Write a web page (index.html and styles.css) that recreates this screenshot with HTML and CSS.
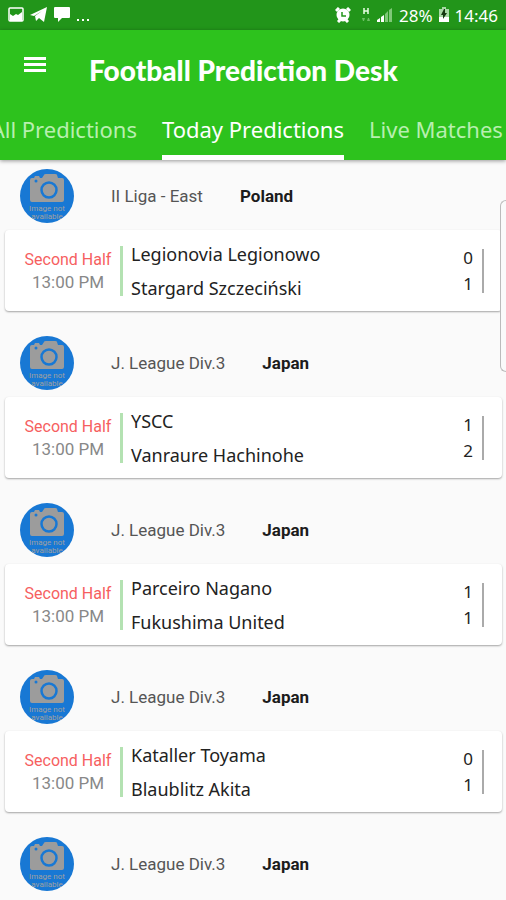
FILE: index.html
```html
<!DOCTYPE html>
<html lang="en">
<head>
<meta charset="utf-8">
<meta name="viewport" content="width=device-width, initial-scale=1">
<title>Football Prediction Desk</title>
<link rel="stylesheet" href="styles.css">
</head>
<body>
<svg class="defs" aria-hidden="true">
  <symbol id="camera" viewBox="0 0 34 28">
    <path fill="#9c9c9c" d="M2 4h2l1-2h4l1 2h2l2-3q0-1 2-1h9q2 0 2 1l1 3h4q2 0 2 2v20q0 2-2 2H2q-2 0-2-2V6q0-2 2-2z"/>
    <circle cx="19" cy="16" r="7.500" fill="none" stroke="#1878d4" stroke-width="2.500"/>
    <circle cx="6" cy="7" r="1.500" fill="#1878d4"/>
  </symbol>
</svg>
<div class="status">
  <div class="status-group">
    <svg width="16" height="16" viewBox="0 0 16 16"><rect x="1" y="1" width="14" height="13" rx="1" fill="none" stroke="#fff" stroke-width="1.500"/><path fill="#fff" d="M2 7l3 2 3-2 2 1 4-3v9H2z"/></svg>
    <svg width="18" height="16" viewBox="0 0 18 16"><path fill="#fff" d="M0 8L17 0l-3 15-5-4-3 3-1-5 7-5-8 5z"/></svg>
    <svg width="16" height="16" viewBox="0 0 16 16"><path fill="#fff" d="M1 0h14q1 0 1 1v9q0 1-1 1H8l-4 4v-4H1q-1 0-1-1V1q0-1 1-1z"/></svg>
    <svg width="14" height="16" viewBox="0 0 14 16"><path fill="#fff" d="M1 12h2v2H1zM6 12h2v2H6zM11 12h2v2h-2z"/></svg>
  </div>
  <div class="status-group">
    <svg class="alarm" width="16" height="16" viewBox="0 0 16 16"><path stroke="#fff" stroke-width="3" d="M1 4l3-3M15 4l-3-3M3 15l2-2M13 15l-2-2"/><circle cx="8" cy="8" r="6.500" fill="#fff"/><path fill="none" stroke="#22951a" stroke-width="1.500" d="M7 5v4h4"/></svg>
    <svg class="data" width="10" height="16" viewBox="0 0 10 16"><path fill="none" stroke="#e8ffe4" stroke-width="1.500" d="M3 1v6M7 1v6M3 4h4"/><path fill="#6cc064" d="M1 11h3l-1 3H2zM6 14h3l-1-3H7z"/></svg>
    <svg width="16" height="16" viewBox="0 0 16 16"><path fill="#fff" d="M0 15v-2l3-2v4zM4 15v-5l3-2v7z"/><path fill="#7fc878" d="M8 15V7l3-3v11zM12 15V3l3-2v14z"/></svg>
    <span>28%</span>
    <svg width="10" height="16" viewBox="0 0 10 16"><path fill="#a9d9a5" d="M3 0h4v2h3v8H0V2h3z"/><path fill="#fff" d="M0 10h10v5H0z"/><path fill="#14380f" d="M5 2L2 8h2v4l4-6H6V2z"/></svg>
    <time>14:46</time>
  </div>
</div>
<header class="bar">
  <div class="title-row">
    <button class="menu" type="button" aria-label="Menu"><svg width="22" height="16" viewBox="0 0 22 16"><path fill="#fff" d="M0 0h22v3H0zM0 6h22v3H0zM0 12h22v3H0z"/></svg></button>
    <h1>Football Prediction Desk</h1>
  </div>
  <nav class="tabs">
    <a class="tab tab-prev" href="#all">All Predictions</a>
    <a class="tab active" href="#today" aria-current="page">Today Predictions</a>
    <a class="tab tab-next" href="#live">Live Matches</a>
  </nav>
</header>
<main class="list">
  <section>
    <div class="league"><div class="avatar"><svg><use href="#camera"/></svg><span>Image not<br>available</span></div><span>II Liga - East</span><strong>Poland</strong></div>
    <article class="card"><div class="when"><span class="half">Second Half</span><time>13:00 PM</time></div><div class="teams"><span>Legionovia Legionowo</span><span>Stargard Szczeciński</span></div><div class="score"><span>0</span><span>1</span></div></article>
  </section>
  <section>
    <div class="league"><div class="avatar"><svg><use href="#camera"/></svg><span>Image not<br>available</span></div><span>J. League Div.3</span><strong>Japan</strong></div>
    <article class="card"><div class="when"><span class="half">Second Half</span><time>13:00 PM</time></div><div class="teams"><span>YSCC</span><span>Vanraure Hachinohe</span></div><div class="score"><span>1</span><span>2</span></div></article>
  </section>
  <section>
    <div class="league"><div class="avatar"><svg><use href="#camera"/></svg><span>Image not<br>available</span></div><span>J. League Div.3</span><strong>Japan</strong></div>
    <article class="card"><div class="when"><span class="half">Second Half</span><time>13:00 PM</time></div><div class="teams"><span>Parceiro Nagano</span><span>Fukushima United</span></div><div class="score"><span>1</span><span>1</span></div></article>
  </section>
  <section>
    <div class="league"><div class="avatar"><svg><use href="#camera"/></svg><span>Image not<br>available</span></div><span>J. League Div.3</span><strong>Japan</strong></div>
    <article class="card"><div class="when"><span class="half">Second Half</span><time>13:00 PM</time></div><div class="teams"><span>Kataller Toyama</span><span>Blaublitz Akita</span></div><div class="score"><span>0</span><span>1</span></div></article>
  </section>
  <section>
    <div class="league"><div class="avatar"><svg><use href="#camera"/></svg><span>Image not<br>available</span></div><span>J. League Div.3</span><strong>Japan</strong></div>
  </section>
  <div class="edge-panel"></div>
</main>
</body>
</html>
```
FILE: styles.css
```css
* { box-sizing: border-box; }
body {
  margin: 0;
  background: #fafafa;
  color: #222;
  font-family: Roboto, sans-serif;
  font-size: 16px;
  overflow-x: hidden;
}
.defs { position: absolute; width: 0; height: 0; }
.status {
  display: flex;
  justify-content: space-between;
  align-items: center;
  height: 30px;
  padding: 0 8px;
  background: #22951a;
  color: #fff;
  font: 17px "Noto Sans", sans-serif;
}
.status-group { display: flex; align-items: center; gap: 6px; }
.alarm { margin-right: 4px; }
.bar {
  position: relative;
  background: #2dc21d;
  color: #fff;
  box-shadow: 0 1px 4px rgba(0, 0, 0, .4);
}
.title-row {
  display: flex;
  align-items: center;
  gap: 43px;
  height: 70px;
  padding: 0 24px;
}
.menu {
  display: flex;
  padding: 0;
  border: 0;
  background: none;
}
h1 {
  margin: 0;
  padding-top: 10px;
  font: 900 28px/32px Lato, sans-serif;
  white-space: nowrap;
}
.tabs {
  display: grid;
  grid-template-columns: 1fr auto 1fr;
  gap: 25px;
  height: 60px;
  overflow: hidden;
}
.tab {
  min-width: 0;
  padding-top: 14px;
  border-bottom: 5px solid transparent;
  color: #b8efb0;
  font: 22px/30px "Noto Sans", sans-serif;
  text-decoration: none;
  white-space: nowrap;
}
.tab-prev { display: flex; justify-content: flex-end; }
.active { color: #fff; border-color: #fff; }
.list { position: relative; padding: 9px 4px 0 5px; }
section { padding-bottom: 25px; }
section:last-of-type { padding-bottom: 0; }
.league {
  display: flex;
  align-items: center;
  gap: 37px;
  padding-left: 15px;
  color: #555;
  font-size: 17px;
}
.league strong { color: #1c1c1c; font-weight: 700; }
.avatar {
  display: flex;
  flex-direction: column;
  align-items: center;
  width: 54px;
  height: 54px;
  padding-top: 5px;
  border-radius: 50%;
  background: #1878d4;
  overflow: hidden;
  color: #a0a0a0;
  font-size: 8px;
  line-height: 8px;
  text-align: center;
}
.avatar svg { width: 34px; height: 28px; margin-bottom: 3px; flex: none; }
.card {
  display: flex;
  align-items: center;
  height: 81px;
  margin-top: 7px;
  padding: 0 18px 0 19px;
  border-radius: 4px;
  background: #fff;
  box-shadow: 0 1px 2px rgba(0, 0, 0, .35);
}
.when {
  display: flex;
  flex-direction: column;
  justify-content: center;
  align-items: center;
  width: 99px;
  height: 50px;
  padding-right: 8px;
  border-right: 3px solid #b4e2b2;
  color: #888;
  font-size: 17px;
  line-height: 23px;
  white-space: nowrap;
}
.half { color: #f65f5f; font-size: 16px; }
.teams {
  display: flex;
  flex-direction: column;
  flex: 1;
  padding-left: 8px;
  font: 18px/34px "Noto Sans", sans-serif;
}
.score {
  display: flex;
  flex-direction: column;
  justify-content: center;
  height: 44px;
  padding-right: 9px;
  border-right: 2px solid #aaa;
  font: 17px/26px "Noto Sans", sans-serif;
}
.edge-panel {
  position: absolute;
  top: 40px;
  right: 0;
  width: 6px;
  height: 172px;
  border: 1px solid #bbb;
  border-right: 0;
  border-radius: 12px 0 0 12px;
  background: #fafafa;
}
```
